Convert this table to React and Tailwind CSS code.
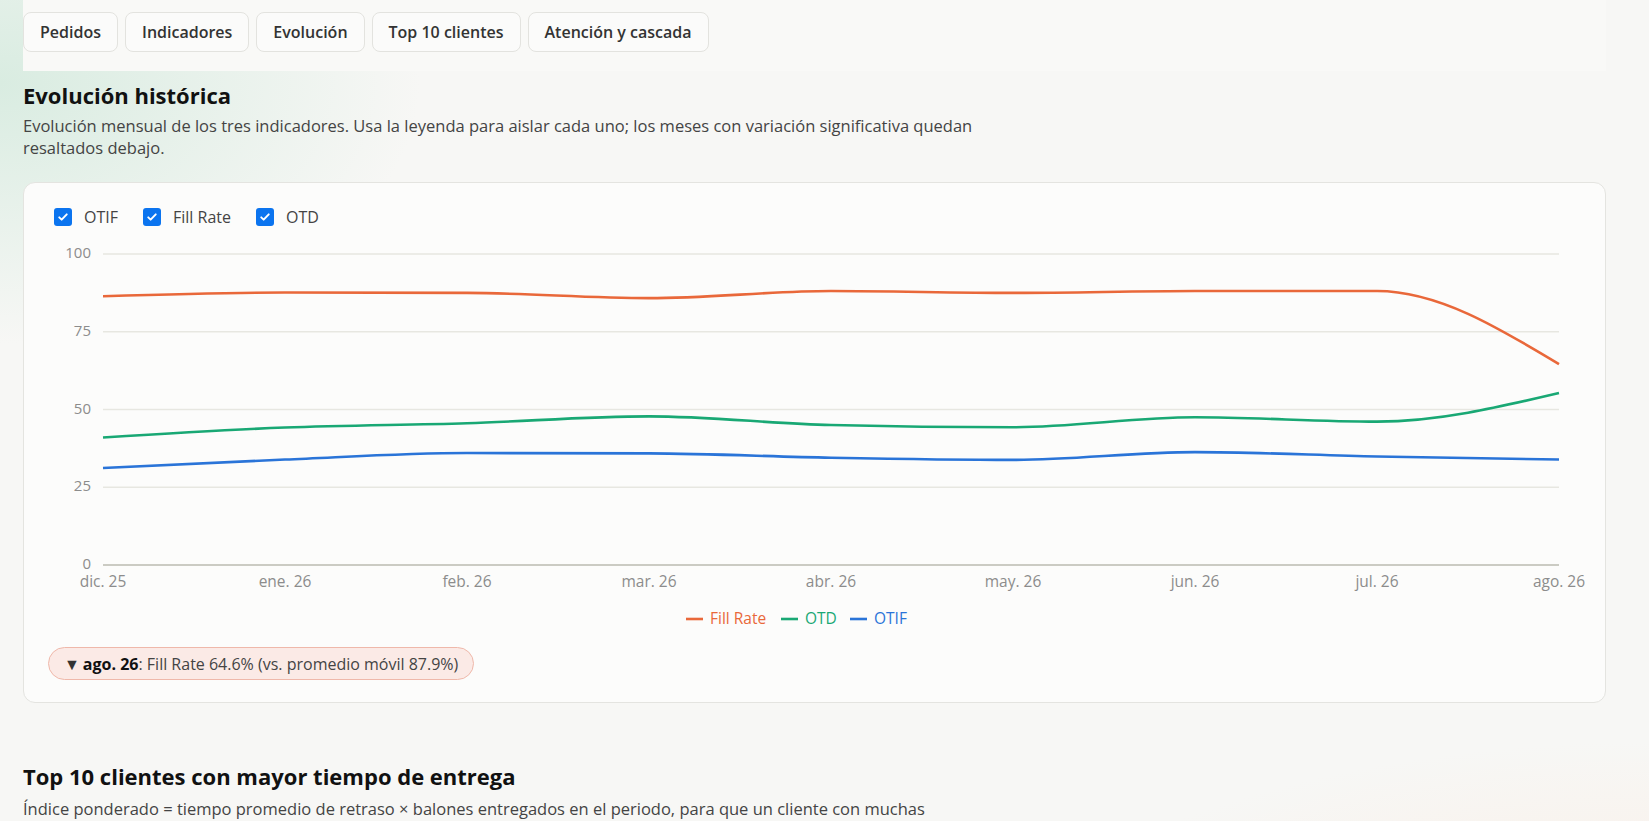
import React from 'react';

const months = ['dic. 25', 'ene. 26', 'feb. 26', 'mar. 26', 'abr. 26', 'may. 26', 'jun. 26', 'jul. 26', 'ago. 26'];

const series = [
  { key: 'fill', name: 'Fill Rate', color: '#e9683a', data: [86.4, 87.6, 87.5, 85.8, 88.1, 87.5, 88.1, 88.1, 64.6] },
  { key: 'otd', name: 'OTD', color: '#19a874', data: [41.0, 44.2, 45.6, 47.8, 45.0, 44.3, 47.5, 46.1, 55.3] },
  { key: 'otif', name: 'OTIF', color: '#2a74d8', data: [31.2, 33.9, 36.0, 35.9, 34.5, 33.8, 36.3, 34.9, 33.9] },
];

// plot area, in svg units
const L = 55;
const R = 1511;
const TOP = 20;
const BOT = 331;
const xAt = (i) => L + (i * (R - L)) / 8;
const yAt = (v) => BOT - (v / 100) * (BOT - TOP);

// d3 curveMonotoneX, written out
function monotone(pts) {
  const n = pts.length;
  const t = new Array(n).fill(0);
  const s = [];
  for (let i = 0; i < n - 1; i++) s.push((pts[i + 1][1] - pts[i][1]) / (pts[i + 1][0] - pts[i][0]));
  for (let i = 1; i < n - 1; i++) {
    const h0 = pts[i][0] - pts[i - 1][0];
    const h1 = pts[i + 1][0] - pts[i][0];
    const p = (s[i - 1] * h1 + s[i] * h0) / (h0 + h1);
    t[i] = (Math.sign(s[i - 1]) + Math.sign(s[i])) * Math.min(Math.abs(s[i - 1]), Math.abs(s[i]), 0.5 * Math.abs(p)) || 0;
  }
  t[0] = (3 * s[0] - t[1]) / 2;
  t[n - 1] = (3 * s[n - 2] - t[n - 2]) / 2;
  let d = `M${pts[0][0]},${pts[0][1]}`;
  for (let i = 0; i < n - 1; i++) {
    const dx = (pts[i + 1][0] - pts[i][0]) / 3;
    d += `C${pts[i][0] + dx},${pts[i][1] + dx * t[i]},${pts[i + 1][0] - dx},${pts[i + 1][1] - dx * t[i + 1]},${pts[i + 1][0]},${pts[i + 1][1]}`;
  }
  return d;
}

const tabs = ['Pedidos', 'Indicadores', 'Evolución', 'Top 10 clientes', 'Atención y cascada'];

const Check = ({ label }) => (
  <label className="flex items-center gap-3">
    <span className="flex h-[18px] w-[18px] items-center justify-center rounded-[3px] bg-[#0b74ef]">
      <svg viewBox="0 0 16 16" className="h-[12px] w-[12px]" fill="none" stroke="white" strokeWidth="2.6" strokeLinecap="round" strokeLinejoin="round">
        <path d="M3 8.5l3.2 3L13 4.5" />
      </svg>
    </span>
    <span className="text-[16px] text-[#444]">{label}</span>
  </label>
);

const Chart = () => {
  const legend = [
    { s: series[0], x: 638 },
    { s: series[1], x: 733 },
    { s: series[2], x: 802 },
  ];
  return (
    <svg width="1533" height="400" className="block overflow-visible font-['Open_Sans',sans-serif]">
      {[0, 25, 50, 75, 100].map((v) => (
        <g key={v}>
          <line x1={L} x2={R} y1={yAt(v)} y2={yAt(v)} stroke={v === 0 ? '#cbcbc3' : '#e7e7e1'} strokeWidth={v === 0 ? 2 : 1.5} />
          <text x={43} y={yAt(v)} dy="4" textAnchor="end" fontSize="15" fill="#8c8c8c">{v}</text>
        </g>
      ))}
      {months.map((m, i) => (
        <text key={m} x={xAt(i)} y={353} textAnchor="middle" fontSize="15.5" fill="#8c8c8c">{m}</text>
      ))}
      {series.map((s) => (
        <path key={s.key} d={monotone(s.data.map((v, i) => [xAt(i), yAt(v)]))} fill="none" stroke={s.color} strokeWidth="2.6" />
      ))}
      {legend.map(({ s, x }) => (
        <g key={s.key}>
          <line x1={x} x2={x + 17} y1={385} y2={385} stroke={s.color} strokeWidth="2.6" />
          <text x={x + 24} y={390} fontSize="15.5" fill={s.color}>{s.name}</text>
        </g>
      ))}
    </svg>
  );
};

export default function App() {
  return (
    <div className="min-h-screen bg-[#f7f7f5] bg-[radial-gradient(ellipse_420px_260px_at_0%_8%,#d9ece1_0%,transparent_100%),radial-gradient(ellipse_700px_300px_at_100%_100%,#fcebdf_0%,transparent_100%)] px-[23px] font-['Open_Sans',sans-serif] text-[#222]">
      <div className="w-[1583px]">
        <div className="sticky top-0 z-10 flex gap-[7px] bg-[#f9f9f7] pt-[12px] pb-[19px]">
          {tabs.map((t) => (
            <button key={t} className="h-[40px] rounded-lg border border-[#e3e3df] bg-[#fbfbfa] px-[16px] text-[16px] font-semibold text-[#333]">
              {t}
            </button>
          ))}
        </div>

        <h2 className="mt-[10px] text-[22px] leading-[28px] font-bold text-[#111]">Evolución histórica</h2>
        <p className="mt-[6px] max-w-[980px] text-[16.5px] leading-[22px] text-[#444]">
          Evolución mensual de los tres indicadores. Usa la leyenda para aislar cada uno; los meses con variación significativa quedan resaltados debajo.
        </p>

        <div className="mt-[23px] rounded-xl border border-[#e4e4e0] bg-[#fcfcfb] px-6 pt-6 pb-[22px]">
          <div className="ml-[6px] flex h-[20px] items-center gap-[25px]">
            <Check label="OTIF" />
            <Check label="Fill Rate" />
            <Check label="OTD" />
          </div>
          <div className="mt-[7px]">
            <Chart />
          </div>
          <div className="mt-[13px] flex">
            <span className="flex h-[33px] items-center rounded-full border border-[#efb8aa] bg-[#fbeae6] px-[15px] text-[16px] text-[#444]">
              <span className="mr-[3px] text-[#333]">▼</span>
              <b className="font-bold text-[#111]">ago. 26</b>: Fill Rate 64.6% (vs. promedio móvil 87.9%)
            </span>
          </div>
        </div>

        <h2 className="mt-[59px] text-[22px] leading-[28px] font-bold text-[#111]">Top 10 clientes con mayor tiempo de entrega</h2>
        <p className="mt-[8px] max-w-[940px] text-[16.5px] leading-[22px] text-[#444]">
          Índice ponderado = tiempo promedio de retraso × balones entregados en el periodo, para que un cliente con muchas entregas tardías pese más en el ranking.
        </p>
        <div className="h-[200px]" />
      </div>
    </div>
  );
}
